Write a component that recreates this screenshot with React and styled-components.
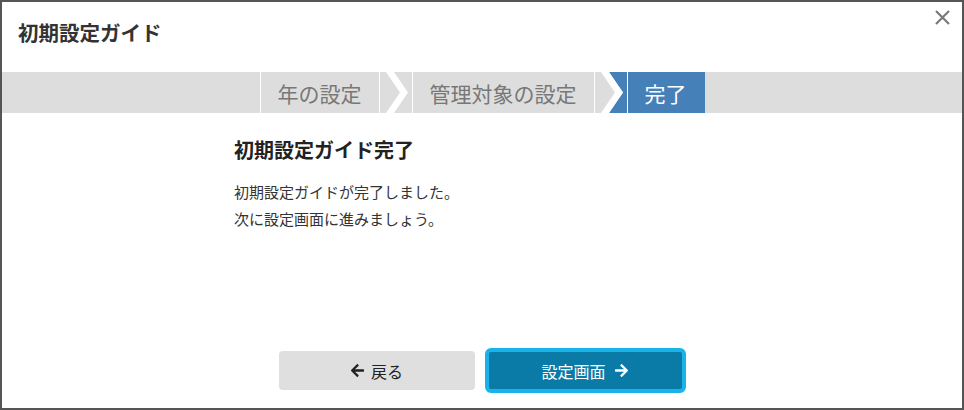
import styled, { createGlobalStyle } from "styled-components";
import { FaArrowLeft, FaArrowRight } from "react-icons/fa";

const GRAY = "#dddddd";
const BLUE = "#4581b8";

const GlobalStyle = createGlobalStyle`
  html, body {
    margin: 0;
    padding: 0;
    background: #ffffff;
  }
  body {
    font-family: "Noto Sans CJK JP", "Noto Sans", sans-serif;
    color: #333333;
  }
`;

const steps = [
  { label: "年の設定", active: false },
  { label: "管理対象の設定", active: false },
  { label: "完了", active: true },
];

const Separator = ({ next }) => (
  <SepBox>
    <svg width="32" height="41" viewBox="0 0 32 41">
      <polygon points="14,0 32,0 32,41 14,41 28,20.5" fill={next} />
      <polygon points="6,0 14,0 28,20.5 14,41 6,41 20,20.5" fill="#ffffff" />
    </svg>
  </SepBox>
);

const CloseIcon = () => (
  <svg width="17" height="17" viewBox="0 0 17 17">
    <path d="M2 2 L15 15 M15 2 L2 15" stroke="#7a7a7a" strokeWidth="2.2" fill="none" />
  </svg>
);

export default function App() {
  return (
    <>
      <GlobalStyle />
      <Dialog>
        <Header>
          <Title>初期設定ガイド</Title>
          <CloseButton aria-label="close">
            <CloseIcon />
          </CloseButton>
        </Header>
        <StepBar>
          {steps.map((s, i) => (
            <StepGroup key={s.label}>
              {i > 0 && <Separator next={s.active ? BLUE : GRAY} />}
              <Step $active={s.active}>{s.label}</Step>
            </StepGroup>
          ))}
        </StepBar>
        <Body>
          <Heading>初期設定ガイド完了</Heading>
          <Text>
            初期設定ガイドが完了しました。
            <br />
            次に設定画面に進みましょう。
          </Text>
        </Body>
        <Footer>
          <BackButton>
            <FaArrowLeft size={15} />
            戻る
          </BackButton>
          <PrimaryButton>
            設定画面
            <FaArrowRight size={15} />
          </PrimaryButton>
        </Footer>
      </Dialog>
    </>
  );
}

const Dialog = styled.div`
  position: relative;
  box-sizing: border-box;
  width: 964px;
  height: 410px;
  border: 2px solid #555555;
  background: #ffffff;
  display: flex;
  flex-direction: column;
`;

const Header = styled.header`
  height: 70px;
  box-sizing: border-box;
  padding: 16px 16px 0;
`;

const Title = styled.h1`
  margin: 0;
  font-size: 20.5px;
  line-height: 28px;
  font-weight: 700;
  color: #333333;
`;

const CloseButton = styled.button`
  position: absolute;
  top: 5px;
  right: 9px;
  width: 21px;
  height: 21px;
  padding: 0;
  border: none;
  background: none;
  display: flex;
  align-items: center;
  justify-content: center;
`;

const StepBar = styled.nav`
  height: 41px;
  background: ${GRAY};
  display: flex;
  justify-content: center;
`;

const StepGroup = styled.div`
  display: flex;
`;

const SepBox = styled.div`
  width: 32px;
  height: 41px;
  display: flex;
`;

const Step = styled.div`
  height: 41px;
  padding: 0 17px;
  display: flex;
  align-items: center;
  font-size: 21px;
  color: ${(p) => (p.$active ? "#ffffff" : "#777777")};
  background: ${(p) => (p.$active ? BLUE : GRAY)};
  border-left: 1px solid #ffffff;
  border-right: 1px solid #ffffff;
  border-right-color: ${(p) => (p.$active ? BLUE : "#ffffff")};
`;

const Body = styled.main`
  flex: 1;
  padding: 23px 0 0 232px;
`;

const Heading = styled.h2`
  margin: 0;
  font-size: 20px;
  line-height: 28px;
  font-weight: 700;
  color: #222222;
`;

const Text = styled.p`
  margin: 14px 0 0;
  font-size: 15px;
  line-height: 27px;
  color: #333333;
`;

const Footer = styled.footer`
  display: flex;
  justify-content: center;
  align-items: center;
  gap: 10px;
  padding-bottom: 15px;
`;

const BaseButton = styled.button`
  box-sizing: border-box;
  display: flex;
  align-items: center;
  justify-content: center;
  gap: 6px;
  font-family: inherit;
  font-size: 16px;
  cursor: pointer;
`;

const BackButton = styled(BaseButton)`
  width: 196px;
  height: 39px;
  border: none;
  border-radius: 4px;
  background: #dfdfdf;
  color: #222222;
`;

const PrimaryButton = styled(BaseButton)`
  width: 201px;
  height: 45px;
  border: 4px solid #19b3ea;
  border-radius: 6px;
  background: #0a7ba6;
  color: #ffffff;
  gap: 8px;
`;
